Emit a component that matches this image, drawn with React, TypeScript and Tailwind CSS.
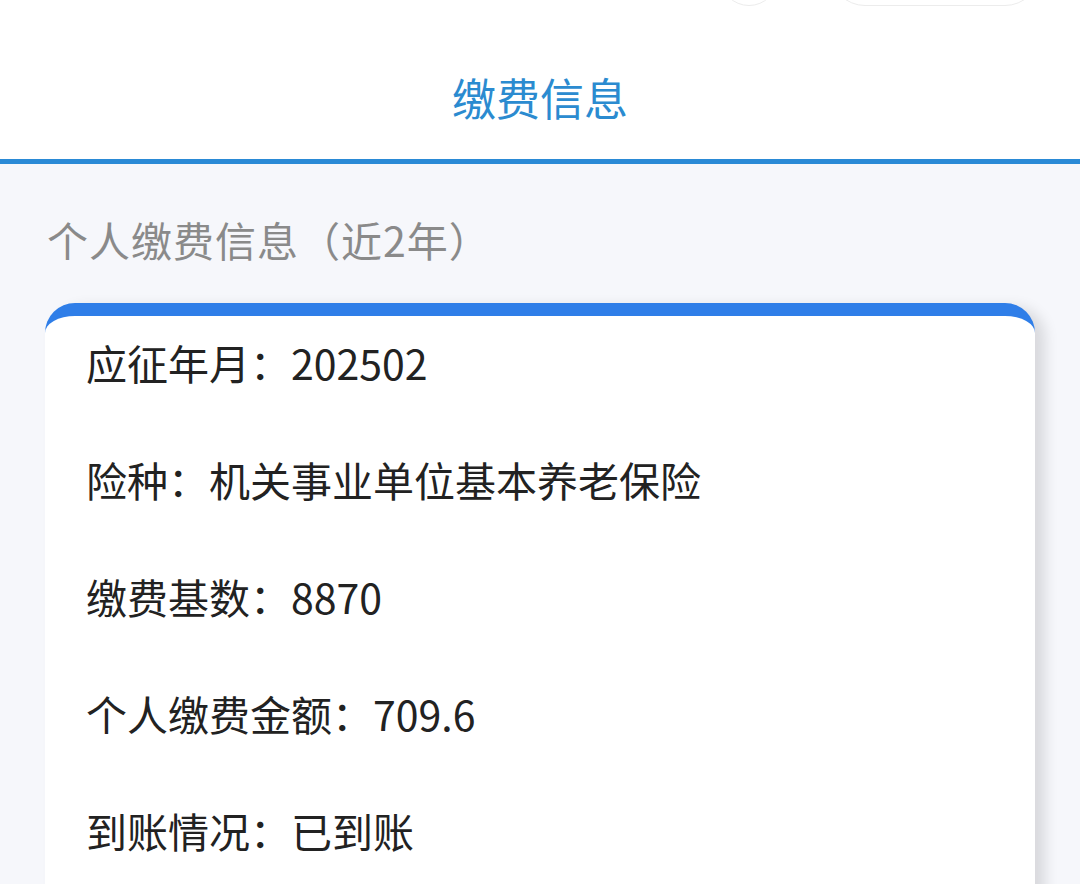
import React from "react";

const rows = [
  ["应征年月：", "202502"],
  ["险种：", "机关事业单位基本养老保险"],
  ["缴费基数：", "8870"],
  ["个人缴费金额：", "709.6"],
  ["到账情况：", "已到账"],
];

export default function App() {
  return (
    <div
      className="w-[1080px] h-[884px] overflow-hidden bg-[#f6f7fb]"
      style={{ fontFamily: '"Noto Sans CJK SC", "Noto Sans", sans-serif' }}
    >
      <div className="relative bg-white h-[164px] border-b-[5px] border-[#2a8ad6] flex items-start justify-center pt-[75px]">
        <div className="absolute left-[720px] top-[-52px] w-[58px] h-[58px] rounded-full border border-[#ececec]" />
        <div className="absolute left-[830px] top-[-64px] w-[210px] h-[70px] rounded-full border border-[#ececec]" />
        <div className="text-[44px] leading-none text-[#2b8bd0]">缴费信息</div>
      </div>
      <div className="px-[45px]">
        <div className="text-[41px] leading-none text-[#8a8a8a] mt-[55px] tracking-[1px] pl-[2px]">
          个人缴费信息（近2年）
        </div>
        <div className="mt-[43px] bg-white rounded-[30px] border-t-[13px] border-[#2f7ee8] shadow-[10px_4px_14px_rgba(0,0,0,0.12)] w-[990px] h-[700px] pt-[17px] pl-[41px] flex flex-col gap-[59px]">
          {rows.map(([k, v]) => (
            <div key={k} className="text-[41px] leading-[58px] text-[#222222] whitespace-nowrap">
              {k}
              {v}
            </div>
          ))}
        </div>
      </div>
    </div>
  );
}
